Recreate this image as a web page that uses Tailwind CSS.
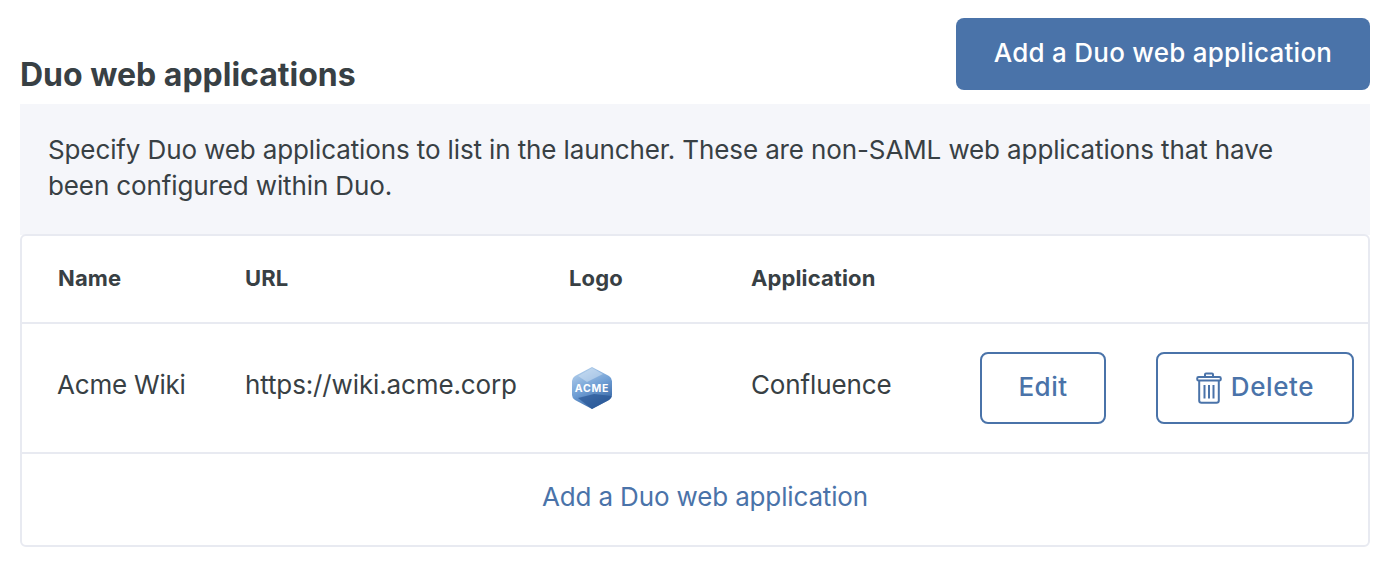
<!DOCTYPE html>
<html lang="en">
<head>
  <meta charset="UTF-8">
  <title>Duo web applications</title>
  <script src="https://cdn.jsdelivr.net/npm/@tailwindcss/browser@4"></script>
</head>
<body class="bg-white font-['Inter',sans-serif] text-[#384044]">
  <div class="w-[1400px] h-[570px] pt-[18px] pl-5 pr-[30px] overflow-hidden">
    <!-- Header -->
    <div class="flex justify-between items-start h-[86px]">
      <h2 class="mt-[38px] text-[32px] leading-[38px] font-bold">Duo web applications</h2>
      <button class="w-[414px] h-[72px] pb-1 rounded-lg bg-[#4a73a9] text-white text-[26px] font-medium tracking-[0.25px]">Add a Duo web application</button>
    </div>

    <!-- Description -->
    <div class="bg-[#f5f6fa] h-[131px] pl-7 pr-20 pt-7">
      <p class="text-[26px] leading-9 tracking-[-0.12px]">Specify Duo web applications to list in the launcher. These are non-SAML web applications that have been configured within Duo.</p>
    </div>

    <!-- Table -->
    <div class="border-2 border-[#e8eaf1] rounded-md h-[313px] -mt-px">
      <div class="grid grid-cols-[187px_324px_182px_1fr] items-center h-[86px] pb-0.5 pl-9 text-[22px] font-bold tracking-[0.12px]">
        <div>Name</div>
        <div>URL</div>
        <div>Logo</div>
        <div>Application</div>
      </div>
      <div class="grid grid-cols-[187px_324px_182px_229px_176px_198px] items-center h-[130px] pl-9 border-t-2 border-[#e8eaf1] text-[26px] tracking-[-0.13px]">
        <div class="pb-2 -ml-px tracking-[-0.2px]">Acme Wiki</div>
        <div class="pb-2">https://wiki.acme.corp</div>
        <div class="pl-px">
          <svg width="44" height="46" viewBox="0 0 44 46" class="block">
            <defs>
              <linearGradient id="hex" x1="0.25" y1="0" x2="0.7" y2="1">
                <stop offset="0" stop-color="#b4d0ec"/>
                <stop offset="0.5" stop-color="#6f9ed4"/>
                <stop offset="1" stop-color="#2f5f9f"/>
              </linearGradient>
            </defs>
            <path d="M22 2 L39 11 Q42 13 42 16 L42 30 Q42 33 39 35 L22 44 L5 35 Q2 33 2 30 L2 16 Q2 13 5 11 Z" fill="url(#hex)"/>
            <path d="M8 33 L24 29 L42 31 Q41 33 39 35 L22 44 Z" fill="#2a5796" opacity="0.7"/>
            <path d="M8 11 L22 3 L33 9 L17 17 Z" fill="#d6e5f5" opacity="0.5"/>
            <text x="22" y="26.5" text-anchor="middle" font-family="Inter, sans-serif" font-size="10.5" font-weight="700" letter-spacing="0.8" fill="#ffffff">ACME</text>
          </svg>
        </div>
        <div class="pb-2">Confluence</div>
        <div>
          <button class="w-[126px] h-[72px] pb-1 rounded-lg border-2 border-[#4a73a9] text-[#4a73a9] font-medium tracking-[0.5px]">Edit</button>
        </div>
        <div>
          <button class="w-[198px] h-[72px] rounded-lg border-2 border-[#4a73a9] text-[#4a73a9] font-medium tracking-[0.6px] flex items-center justify-center gap-[9px]">
            <svg width="26" height="32" viewBox="0 0 26 32" fill="none" stroke="#4a73a9" stroke-width="2">
              <path d="M9 5 V2.5 Q9 1.5 10 1.5 H16 Q17 1.5 17 2.5 V5"/>
              <rect x="1.2" y="5" width="23.6" height="3.6" rx="1.4"/>
              <path d="M3.2 8.6 V28.5 Q3.2 30.8 5.5 30.8 H20.5 Q22.8 30.8 22.8 28.5 V8.6"/>
              <path d="M8.5 13 V26.5 M13 13 V26.5 M17.5 13 V26.5"/>
            </svg>
            <span class="pb-1">Delete</span>
          </button>
        </div>
      </div>
      <div class="flex items-center justify-center h-[93px] pb-[6px] pl-5 border-t-2 border-[#e8eaf1] text-[26px] tracking-[-0.15px] text-[#4a73a9]">Add a Duo web application</div>
    </div>
  </div>
</body>
</html>
